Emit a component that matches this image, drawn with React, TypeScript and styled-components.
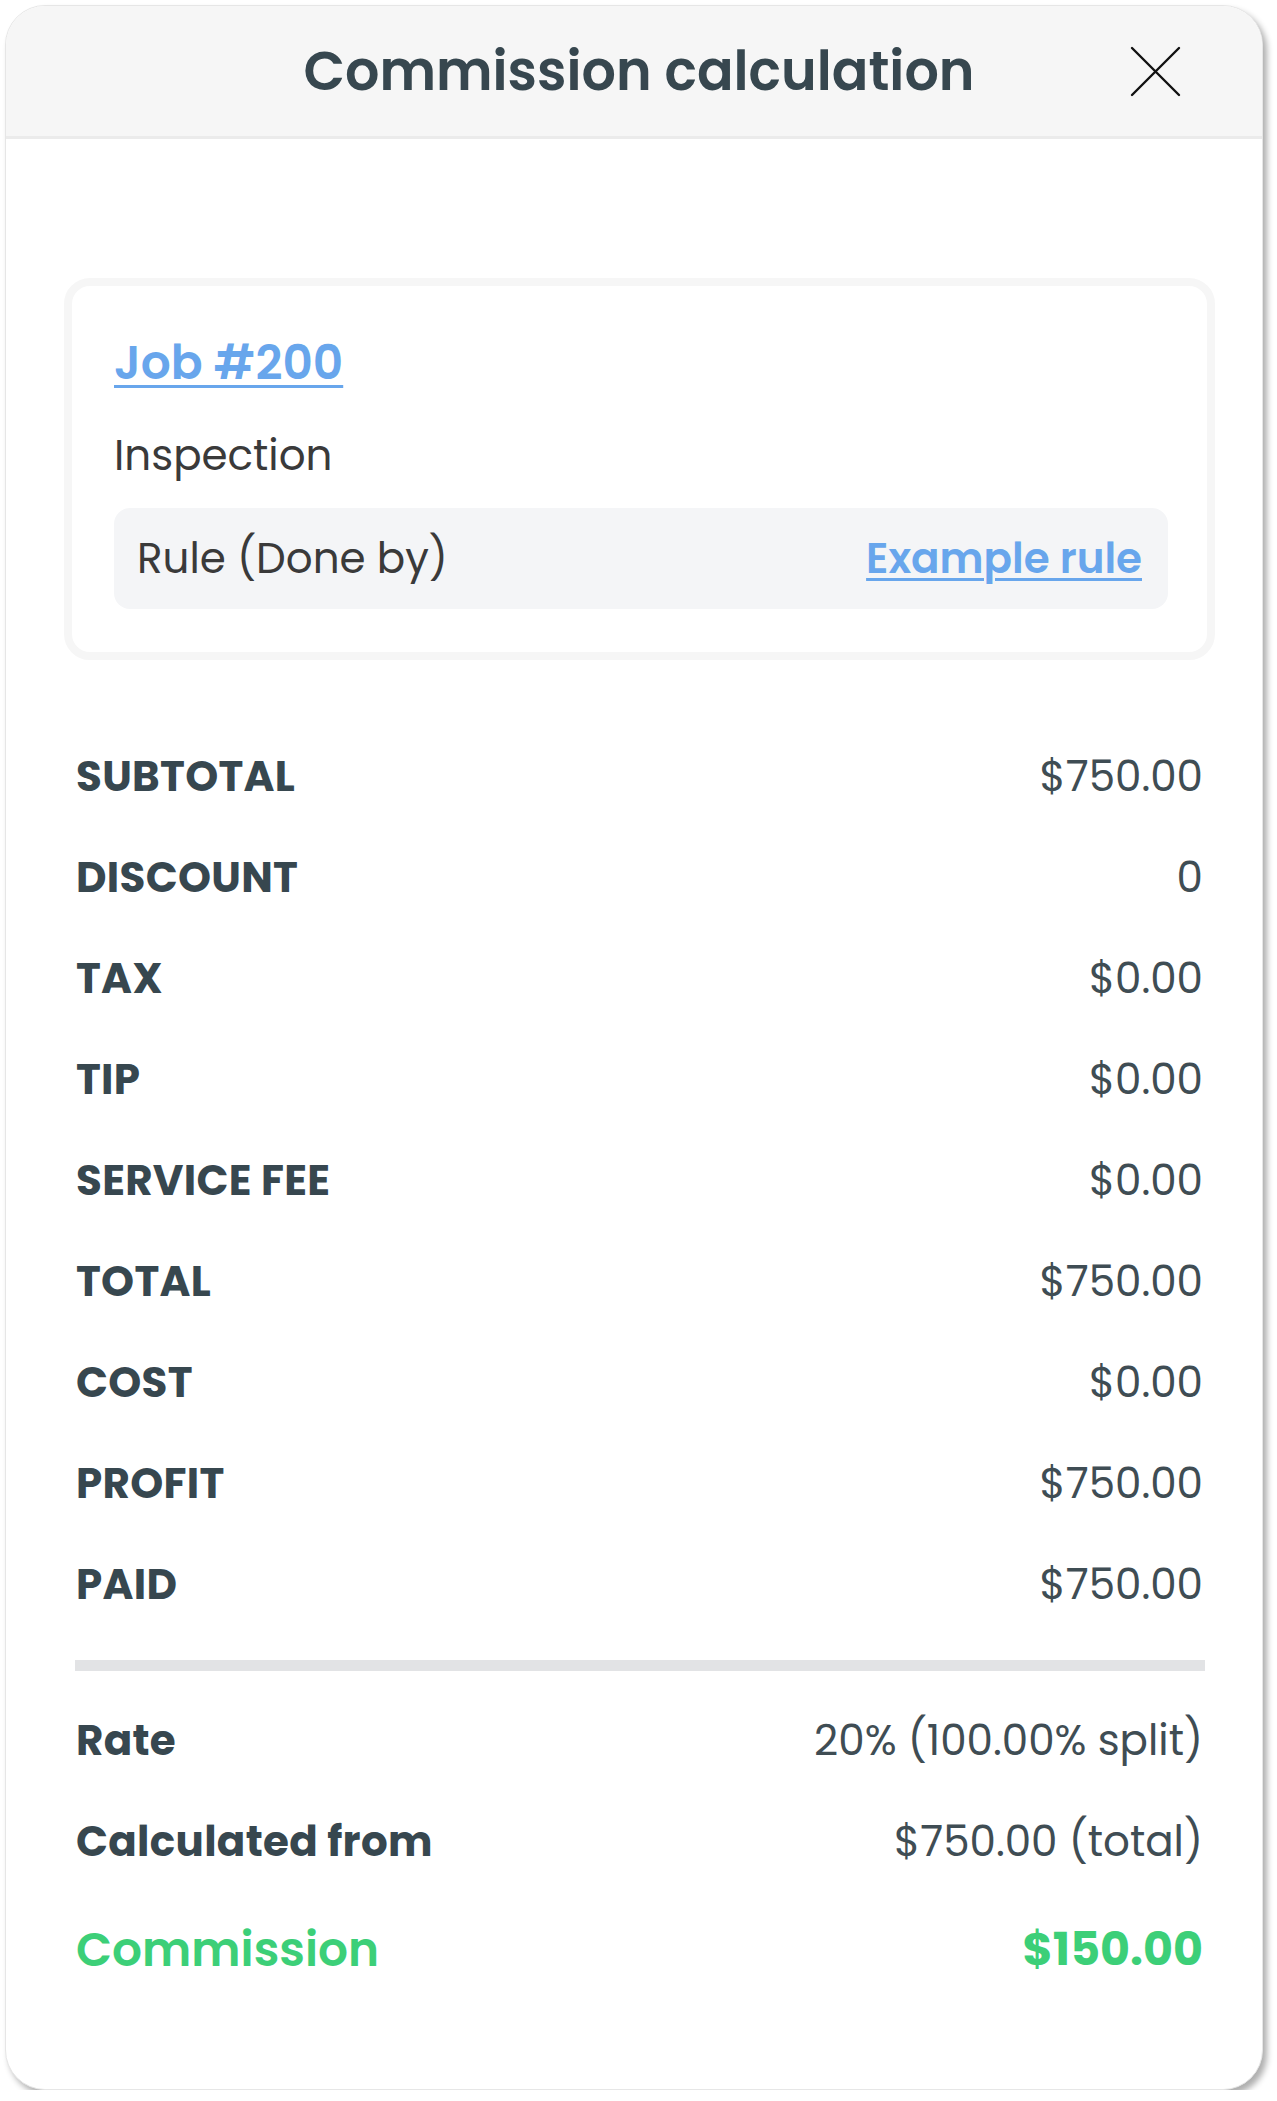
import styled, { createGlobalStyle } from 'styled-components';

const GlobalStyle = createGlobalStyle`
  body {
    margin: 0;
    background: #ffffff;
    font-family: Poppins, Inter, 'Noto Sans', sans-serif;
  }
`;

interface Line {
  label: string;
  value: string;
}

const totals: Line[] = [
  { label: 'SUBTOTAL', value: '$750.00' },
  { label: 'DISCOUNT', value: '0' },
  { label: 'TAX', value: '$0.00' },
  { label: 'TIP', value: '$0.00' },
  { label: 'SERVICE FEE', value: '$0.00' },
  { label: 'TOTAL', value: '$750.00' },
  { label: 'COST', value: '$0.00' },
  { label: 'PROFIT', value: '$750.00' },
  { label: 'PAID', value: '$750.00' },
];

const CloseIcon = () => (
  <svg width='51' height='51' viewBox='0 0 51 51' fill='none'>
    <path d='M2 2L49 49M49 2L2 49' stroke='#111' strokeWidth='2.4' strokeLinecap='round' />
  </svg>
);

export default function App() {
  return (
    <>
      <GlobalStyle />
      <Modal>
        <Header>
          <span />
          <Title>Commission calculation</Title>
          <CloseButton aria-label='Close'>
            <CloseIcon />
          </CloseButton>
        </Header>
        <Body>
          <JobCard>
            <JobLink href='#'>Job #200</JobLink>
            <Service>Inspection</Service>
            <RuleBox>
              <RuleLabel>Rule (Done by)</RuleLabel>
              <RuleLink href='#'>Example rule</RuleLink>
            </RuleBox>
          </JobCard>
          <Rows>
            {totals.map(({ label, value }) => (
              <Row key={label}>
                <Label>{label}</Label>
                <Value>{value}</Value>
              </Row>
            ))}
            <Divider />
            <Row>
              <Label>Rate</Label>
              <Value>20% (100.00% split)</Value>
            </Row>
            <Row>
              <Label>Calculated from</Label>
              <Value>$750.00 (total)</Value>
            </Row>
            <Row $highlight>
              <Label $highlight>Commission</Label>
              <Value $highlight>$150.00</Value>
            </Row>
          </Rows>
        </Body>
      </Modal>
    </>
  );
}

const Modal = styled.div`
  box-sizing: border-box;
  width: 1258px;
  height: 2085px;
  margin: 5px 0 0 5px;
  border: 1px solid #e6e6e6;
  border-radius: 40px;
  background: #ffffff;
  box-shadow: 4px 5px 6px rgba(0, 0, 0, 0.32);
  overflow: hidden;
  display: flex;
  flex-direction: column;
`;

const Header = styled.div`
  box-sizing: border-box;
  height: 133px;
  padding: 0 81px 0 91px;
  background: #f6f6f6;
  border-bottom: 3px solid #ebebeb;
  display: grid;
  grid-template-columns: 1fr auto 1fr;
  align-items: center;
`;

const Title = styled.h1`
  margin: 0;
  font-size: 54px;
  font-weight: 600;
  color: #37474f;
`;

const CloseButton = styled.button`
  justify-self: end;
  display: flex;
  padding: 0;
  border: none;
  background: none;
  cursor: pointer;
`;

const Body = styled.div`
  padding: 139px 47px 0 58px;
`;

const JobCard = styled.div`
  border: 8px solid #f6f6f6;
  border-radius: 26px;
  padding: 46px 39px 43px 42px;
  display: flex;
  flex-direction: column;
`;

const JobLink = styled.a`
  align-self: flex-start;
  font-size: 47px;
  line-height: 62px;
  font-weight: 600;
  color: #68a6ec;
  text-decoration: underline;
  text-decoration-thickness: 3px;
  text-underline-offset: 6px;
`;

const Service = styled.div`
  margin-top: 35px;
  font-size: 42px;
  line-height: 54px;
  color: #3a3a3a;
`;

const RuleBox = styled.div`
  margin-top: 25px;
  height: 101px;
  padding: 0 26px 0 23px;
  border-radius: 16px;
  background: #f4f5f7;
  display: flex;
  align-items: center;
  justify-content: space-between;
`;

const RuleLabel = styled.span`
  font-size: 42px;
  color: #3a3a3a;
`;

const RuleLink = styled.a`
  font-size: 42px;
  font-weight: 600;
  color: #68a6ec;
  text-decoration: underline;
  text-decoration-thickness: 3px;
  text-underline-offset: 5px;
`;

const Rows = styled.div`
  margin-top: 66px;
  padding: 0 12px;
  display: flex;
  flex-direction: column;
`;

const Row = styled.div<{ $highlight?: boolean }>`
  height: ${({ $highlight }) => ($highlight ? '108px' : '101px')};
  padding-top: ${({ $highlight }) => ($highlight ? '7px' : '0')};
  box-sizing: border-box;
  display: flex;
  align-items: center;
  justify-content: space-between;
`;

const Label = styled.span<{ $highlight?: boolean }>`
  font-size: ${({ $highlight }) => ($highlight ? '47px' : '42px')};
  font-weight: ${({ $highlight }) => ($highlight ? 600 : 700)};
  color: ${({ $highlight }) => ($highlight ? '#3ccf78' : '#37474f')};
  letter-spacing: ${({ $highlight }) => ($highlight ? '0' : '0.3px')};
`;

const Value = styled.span<{ $highlight?: boolean }>`
  font-size: ${({ $highlight }) => ($highlight ? '46px' : '42px')};
  font-weight: ${({ $highlight }) => ($highlight ? 700 : 400)};
  color: ${({ $highlight }) => ($highlight ? '#3ccf78' : '#3f4d54')};
`;

const Divider = styled.div`
  height: 11px;
  margin: 25px -2px 19px -1px;
  background: #e2e3e5;
`;
